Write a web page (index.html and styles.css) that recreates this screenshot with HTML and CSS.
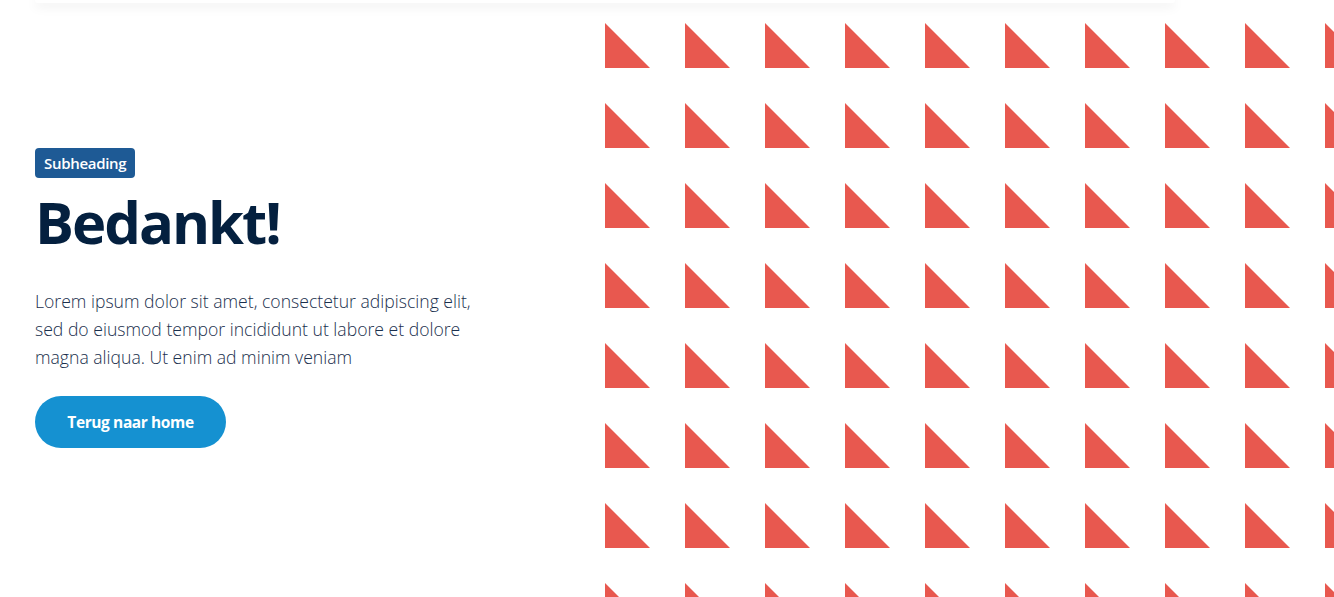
FILE: index.html
```html
<!DOCTYPE html>
<html lang="nl">
<head>
<meta charset="utf-8">
<title>Bedankt</title>
<link rel="stylesheet" href="styles.css">
</head>
<body>
<div class="navbar"></div>
<main class="hero">
  <section class="hero-text">
    <span class="badge">Subheading</span>
    <h1 class="title">Bedankt!</h1>
    <p class="lead">Lorem ipsum dolor sit amet, consectetur adipiscing elit, sed do eiusmod tempor incididunt ut labore et dolore magna aliqua. Ut enim ad minim veniam</p>
    <a class="btn" href="#">Terug naar home</a>
  </section>
  <div class="hero-pattern">
    <svg class="pattern-svg" width="100%" height="100%" aria-hidden="true">
      <defs>
        <pattern id="tri" x="0" y="23" width="80" height="80" patternUnits="userSpaceOnUse">
          <polygon points="0,0 0,45 45,45" fill="#e8584f"/>
        </pattern>
      </defs>
      <rect width="100%" height="100%" fill="url(#tri)"/>
    </svg>
  </div>
</main>
</body>
</html>
```
FILE: styles.css
```css
html, body {
  margin: 0;
  padding: 0;
  background: #ffffff;
}
body {
  font-family: "Open Sans", "Noto Sans", sans-serif;
  color: #1f3350;
  overflow: hidden;
}
.navbar {
  position: absolute;
  top: 0;
  left: 35px;
  width: 1140px;
  height: 3px;
  background: #ffffff;
  border-radius: 0 0 6px 6px;
  box-shadow: 0 2px 12px rgba(0, 0, 0, 0.15);
  z-index: 2;
}
.hero {
  display: grid;
  grid-template-columns: 605px 1fr;
  height: 597px;
}
.hero-text {
  display: flex;
  flex-direction: column;
  align-items: flex-start;
  justify-content: flex-start;
  padding-left: 35px;
  padding-top: 148px;
}
.badge {
  display: inline-block;
  background: #1e5a95;
  color: #ffffff;
  font-size: 15px;
  font-weight: 600;
  line-height: 30px;
  height: 30px;
  padding: 0 9px;
  border-radius: 4px;
  letter-spacing: -0.3px;
}
.title {
  margin: 6px 0 0;
  font-size: 58px;
  font-weight: 700;
  line-height: 76px;
  color: #04203f;
  letter-spacing: -2px;
}
.lead {
  margin: 27px 0 0;
  width: 445px;
  font-size: 17.6px;
  line-height: 28px;
  font-weight: 300;
  color: #1a2f4d;
}
.btn {
  margin-top: 25px;
  display: inline-flex;
  align-items: center;
  justify-content: center;
  width: 191px;
  height: 52px;
  border-radius: 26px;
  background: #1591d1;
  color: #ffffff;
  font-size: 15.5px;
  font-weight: 700;
  text-decoration: none;
  letter-spacing: -0.4px;
}
.hero-pattern {
  height: 597px;
}
.pattern-svg {
  display: block;
}
```
